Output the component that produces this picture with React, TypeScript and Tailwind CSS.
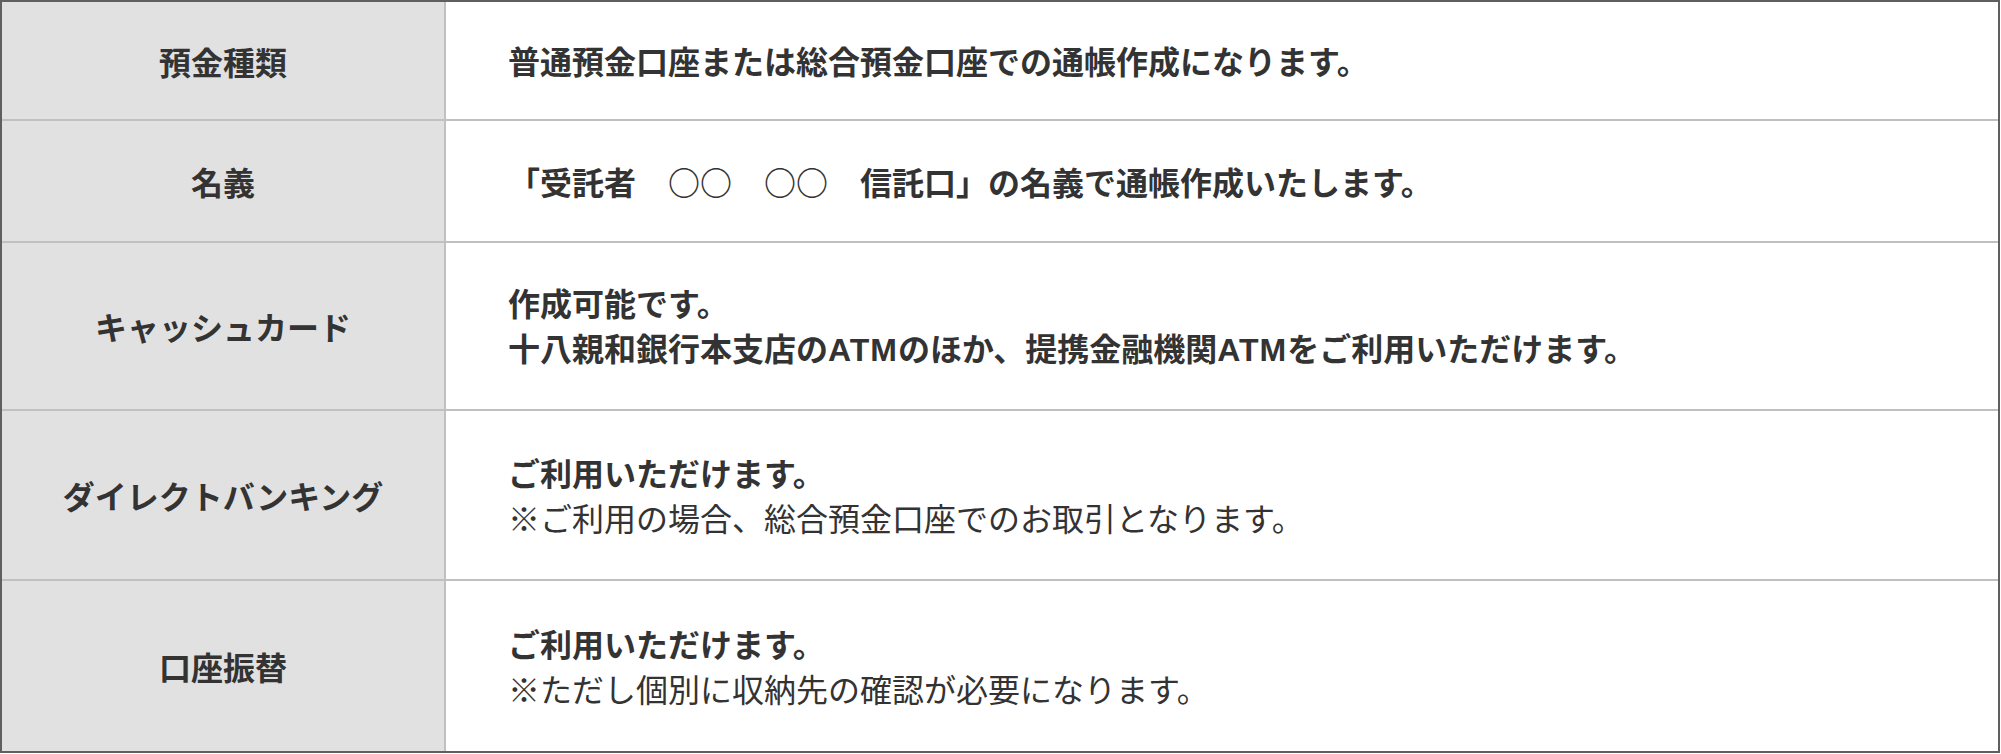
import React from "react";

type Line = { content: React.ReactNode; bold: boolean };

const Atm = () => (
  <span className="tracking-[1px]" style={{ fontFamily: '"Liberation Sans", Arial, sans-serif' }}>
    ATM
  </span>
);

const rows: { label: string; lines: Line[]; h: string }[] = [
  { label: "預金種類", lines: [{ content: "普通預金口座または総合預金口座での通帳作成になります。", bold: true }], h: "h-[119px]" },
  { label: "名義", lines: [{ content: "「受託者　○○　○○　信託口」の名義で通帳作成いたします。", bold: true }], h: "h-[122px]" },
  {
    label: "キャッシュカード",
    lines: [
      { content: "作成可能です。", bold: true },
      {
        content: (
          <>
            十八親和銀行本支店の<Atm />のほか、提携金融機関<Atm />をご利用いただけます。
          </>
        ),
        bold: true,
      },
    ],
    h: "h-[168px]",
  },
  {
    label: "ダイレクトバンキング",
    lines: [
      { content: "ご利用いただけます。", bold: true },
      { content: "※ご利用の場合、総合預金口座でのお取引となります。", bold: false },
    ],
    h: "h-[170px]",
  },
  {
    label: "口座振替",
    lines: [
      { content: "ご利用いただけます。", bold: true },
      { content: "※ただし個別に収納先の確認が必要になります。", bold: false },
    ],
    h: "h-[170px]",
  },
];

export default function App() {
  return (
    <div className="w-[2001px] h-[754px] bg-white" style={{ fontFamily: '"Noto Sans CJK JP", "Noto Sans", sans-serif' }}>
      <div className="w-[2000px] border-2 border-[#5f5f5f] flex flex-col text-[#333333]">
        {rows.map((r, i) => (
          <div
            key={i}
            className={`flex ${r.h} ${i < rows.length - 1 ? "border-b-2 border-[#c0c0c0]" : ""}`}
          >
            <div className="w-[444px] shrink-0 bg-[#e1e1e1] border-r-2 border-[#c0c0c0] flex items-center justify-center text-[32px] font-bold">
              {r.label}
            </div>
            <div className="flex-1 flex flex-col justify-center pl-[62px] text-[32px] leading-[45px]">
              {r.lines.map((l, j) => (
                <div key={j} className={l.bold ? "font-bold" : "font-normal"}>
                  {l.content}
                </div>
              ))}
            </div>
          </div>
        ))}
      </div>
    </div>
  );
}
